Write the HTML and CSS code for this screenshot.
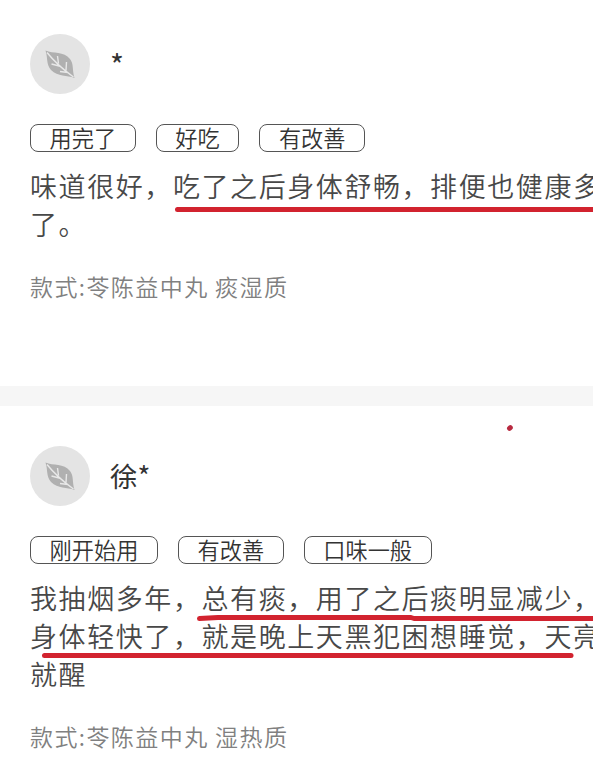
FILE: index.html
```html
<!DOCTYPE html>
<html lang="zh-CN">
<head>
    <meta charset="UTF-8">
    <meta name="viewport" content="width=device-width, initial-scale=1.0">
    <title>评价</title>
    <link rel="stylesheet" href="styles.css">
</head>
<body>
    <svg class="defs" width="0" height="0">
        <symbol id="leaf" viewBox="0 0 60 60">
            <path d="M15.500 16.500C23 20 34 17 40 25C44 30 42 36 44.500 44C37 41 28 43 21 36C16 30 18 24 15.500 16.500Z" fill="#b0b0b0"/>
            <path d="M17 18.500C23 26 31 34 43.500 43M28.500 29.500L27.500 22M36 36.500L36.500 28M31 32.500L21.500 30M38 38.500L30 37.500" fill="none" stroke="#e8e8e8" stroke-width="1.400"/>
        </symbol>
    </svg>

    <div class="reviews">
        <div class="review">
            <div class="user">
                <div class="avatar"><svg><use href="#leaf"/></svg></div>
                <span class="name name-hidden">*</span>
            </div>
            <div class="tags">
                <span class="tag">用完了</span>
                <span class="tag">好吃</span>
                <span class="tag">有改善</span>
            </div>
            <p class="comment">味道很好，吃了之后身体舒畅，排便也健康多<br>了。</p>
            <p class="style">款式:苓陈益中丸 痰湿质</p>
        </div>

        <div class="review">
            <div class="user">
                <div class="avatar"><svg><use href="#leaf"/></svg></div>
                <span class="name">徐*</span>
            </div>
            <div class="tags">
                <span class="tag">刚开始用</span>
                <span class="tag">有改善</span>
                <span class="tag">口味一般</span>
            </div>
            <p class="comment">我抽烟多年，总有痰，用了之后痰明显减少，<br>身体轻快了，就是晚上天黑犯困想睡觉，天亮<br>就醒</p>
            <p class="style">款式:苓陈益中丸 湿热质</p>
        </div>

        <!-- red pen marks over the text -->
        <svg class="marks" viewBox="0 0 593 769">
            <path d="M177.500 209.500H600"/>
            <path d="M199.500 618.500L218 617.500H411L414 618.500H600"/>
            <path d="M44.500 655.500H571"/>
            <path class="dot" d="M509.500 428.300L510.300 427.600"/>
        </svg>
    </div>
</body>
</html>
```
FILE: styles.css
```css
* {
    margin: 0;
    padding: 0;
    box-sizing: border-box;
}
body {
    background-color: white;
    font-family: "Noto Sans CJK SC", sans-serif;
    overflow: hidden;
}
.defs {
    display: block;
}
.reviews {
    position: relative;
    width: 593px;
    height: 769px;
    overflow: hidden;
}
.review {
    height: 386px;
    padding: 34px 0 0 30px;
}
.review + .review {
    height: 403px;
    padding-top: 40px;
    border-top: 20px solid #f6f6f6;
    box-sizing: content-box;
}
.user {
    display: flex;
    align-items: center;
    gap: 20px;
    height: 60px;
}
.avatar {
    width: 60px;
    height: 60px;
    border-radius: 50%;
    background-color: #e4e4e4;
}
.avatar svg {
    display: block;
    width: 60px;
    height: 60px;
}
.name {
    font-size: 27.500px;
    line-height: 58px;
    padding-bottom: 2px;
    color: #333;
}
.name-hidden {
    font-size: 30px;
    padding-bottom: 0;
}
.tags {
    display: flex;
    gap: 20px;
    margin-top: 30px;
}
.tag {
    height: 28px;
    padding: 0 18.600px;
    border: 1px solid #555;
    border-radius: 8px;
    font-size: 22.200px;
    font-weight: 350;
    line-height: 24px;
    color: #333;
    white-space: nowrap;
}
.comment {
    margin-top: 15px;
    font-size: 27px;
    font-weight: 350;
    letter-spacing: 1.580px;
    line-height: 38px;
    color: #484848;
    white-space: nowrap;
}
.style {
    margin-top: 23px;
    font-size: 23px;
    font-weight: 350;
    letter-spacing: 1.420px;
    line-height: 40px;
    color: #808080;
    white-space: nowrap;
}
.marks {
    position: absolute;
    left: 0;
    top: 0;
    width: 593px;
    height: 769px;
    fill: none;
    stroke: #d2232f;
    stroke-width: 5;
    stroke-linecap: round;
    stroke-linejoin: round;
}
.marks .dot {
    stroke: #b82a40;
}
```
